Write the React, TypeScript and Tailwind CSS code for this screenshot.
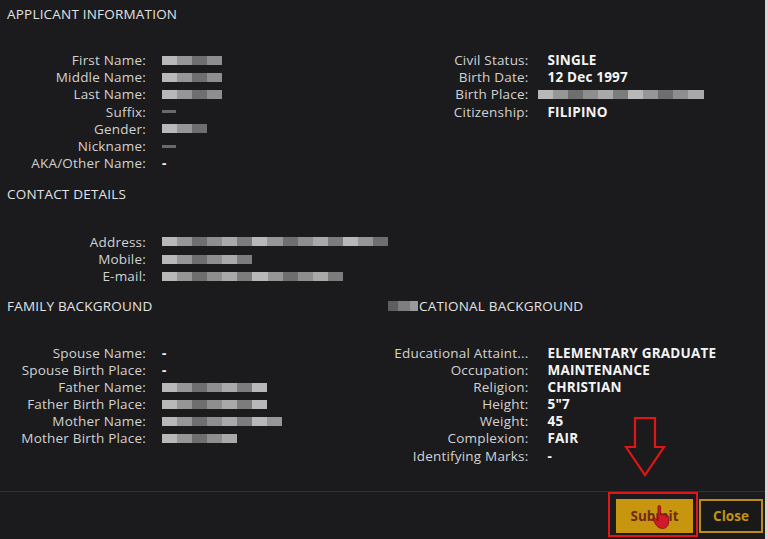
import type { ReactNode } from 'react';

// Pixelated (censored) value: a run of grey cells, widths taken from data.
const SHADES = [
  'bg-[#8e8e8e]',
  'bg-[#a9a9a9]',
  'bg-[#7c7c7c]',
  'bg-[#b8b8b8]',
  'bg-[#969696]',
  'bg-[#6e6e6e]',
];

function Blur({ width, thin = false }: { width: number; thin?: boolean }) {
  if (thin) {
    return <div className="h-[3px] bg-[#6a6a6a]" style={{ width }} />;
  }
  const cells = Math.max(2, Math.round(width / 15));
  return (
    <div className="flex h-[9px] overflow-hidden" style={{ width }}>
      {Array.from({ length: cells }).map((_, i) => (
        <div key={i} className={`h-full flex-1 ${SHADES[(i * 7 + 3) % SHADES.length]}`} />
      ))}
    </div>
  );
}

type Row = { label: string; value?: string; blur?: number; thin?: boolean };

function Field({ label, value, blur, thin, gap }: Row & { gap: string }) {
  return (
    <div className="flex h-[17.2px] items-center">
      <div className="w-[146px] shrink-0 whitespace-nowrap text-right text-[13.5px] tracking-[0.2px] text-[#d2d2d2]">
        {label}
      </div>
      <div className={`flex items-center ${gap}`}>
        {blur ? (
          <Blur width={blur} thin={thin} />
        ) : (
          <span className="whitespace-nowrap text-[13.5px] font-bold tracking-[0.2px] text-[#f4f4f4]">{value}</span>
        )}
      </div>
    </div>
  );
}

function Column({ rows, right = false }: { rows: Row[]; right?: boolean }) {
  return (
    <div className="flex w-[384px] flex-col">
      {rows.map((r) => (
        <Field key={r.label} {...r} gap={right ? 'pl-[19px]' : 'pl-[16px]'} />
      ))}
    </div>
  );
}

function Heading({ children, className = '' }: { children: ReactNode; className?: string }) {
  return (
    <div className={`flex h-[20px] items-center whitespace-nowrap text-[13.5px] tracking-[0.2px] text-[#e2e2e2] ${className}`}>
      {children}
    </div>
  );
}

const applicant: Row[] = [
  { label: 'First Name:', blur: 60 },
  { label: 'Middle Name:', blur: 60 },
  { label: 'Last Name:', blur: 60 },
  { label: 'Suffix:', blur: 14, thin: true },
  { label: 'Gender:', blur: 45 },
  { label: 'Nickname:', blur: 14, thin: true },
  { label: 'AKA/Other Name:', value: '-' },
];

const personal: Row[] = [
  { label: 'Civil Status:', value: 'SINGLE' },
  { label: 'Birth Date:', value: '12 Dec 1997' },
  { label: 'Birth Place:', blur: 166 },
  { label: 'Citizenship:', value: 'FILIPINO' },
];

const contact: Row[] = [
  { label: 'Address:', blur: 226 },
  { label: 'Mobile:', blur: 90 },
  { label: 'E-mail:', blur: 181 },
];

const family: Row[] = [
  { label: 'Spouse Name:', value: '-' },
  { label: 'Spouse Birth Place:', value: '-' },
  { label: 'Father Name:', blur: 105 },
  { label: 'Father Birth Place:', blur: 105 },
  { label: 'Mother Name:', blur: 120 },
  { label: 'Mother Birth Place:', blur: 75 },
];

const education: Row[] = [
  { label: 'Educational Attaint...', value: 'ELEMENTARY GRADUATE' },
  { label: 'Occupation:', value: 'MAINTENANCE' },
  { label: 'Religion:', value: 'CHRISTIAN' },
  { label: 'Height:', value: '5"7' },
  { label: 'Weight:', value: '45' },
  { label: 'Complexion:', value: 'FAIR' },
  { label: 'Identifying Marks:', value: '-' },
];

export default function App() {
  return (
    <div
      className="relative flex h-[539px] w-[768px] flex-col overflow-hidden border-r-[3px] border-[#d6d6d6] bg-[#1b1b1d]"
      style={{ fontFamily: '"Open Sans", "Liberation Sans", sans-serif' }}
    >
      <div className="flex h-[491px] flex-col">
        <Heading className="mt-[4px] pl-[7px]">APPLICANT INFORMATION</Heading>
        <div className="mt-[27.6px] flex">
          <Column rows={applicant} />
          <div className="flex w-[384px] flex-col">
            {personal.map((r) => (
              <div key={r.label} className="flex h-[17.2px] items-center">
                <div className="w-[146px] shrink-0 whitespace-nowrap text-right text-[13.5px] tracking-[0.2px] text-[#d2d2d2]">
                  {r.label}
                </div>
                {r.blur ? (
                  <div className="pl-[9px]">
                    <Blur width={r.blur} />
                  </div>
                ) : (
                  <span className="pl-[19px] text-[13.5px] font-bold tracking-[0.2px] text-[#f4f4f4]">{r.value}</span>
                )}
              </div>
            ))}
          </div>
        </div>

        <Heading className="mt-[12.6px] pl-[7px]">CONTACT DETAILS</Heading>
        <div className="mt-[28.8px]">
          <Column rows={contact} />
        </div>

        <div className="mt-[11.4px] flex">
          <Heading className="w-[388px] pl-[7px]">FAMILY BACKGROUND</Heading>
          <Heading>
            <span className="mr-[1px] flex h-[10px] w-[30px]">
              <span className="h-full w-[10px] bg-[#5e5e5e]" />
              <span className="h-full w-[12px] bg-[#7d7d7d]" />
              <span className="h-full w-[8px] bg-[#9a9a9a]" />
            </span>
            CATIONAL BACKGROUND
          </Heading>
        </div>
        <div className="mt-[27.8px] flex">
          <Column rows={family} />
          <Column rows={education} right />
        </div>
      </div>

      <div className="h-px bg-[#3a3322]" />

      <div className="flex flex-1 items-start justify-end gap-[6px] pr-[2px] pt-[7px]">
        <button className="h-[34px] w-[77px] bg-[#c8960e] text-[13.5px] font-bold text-[#6e2a12]">Submit</button>
        <button className="h-[34px] w-[64px] border-2 border-[#b98d16] bg-[#19191a] text-[13.5px] font-bold text-[#c39414]">
          Close
        </button>
      </div>

      {/* annotation: red arrow and box around Submit */}
      <svg className="absolute left-[624px] top-[416px]" width="44" height="62" viewBox="0 0 44 62">
        <path
          d="M11 2 H31 V31 H40 L21 59 L2 31 H11 Z"
          fill="none"
          stroke="#e21414"
          strokeWidth="2.2"
          strokeLinejoin="miter"
        />
      </svg>
      <div className="absolute left-[608px] top-[492px] h-[45px] w-[90px] border-2 border-[#e3151b]" />
      <svg className="absolute left-[652px] top-[504px]" width="22" height="26" viewBox="0 0 22 26">
        <path
          d="M6 2.5c0-1.2 2.6-1.2 2.6 0V11l1-0.2c0-1 2.4-1 2.4 0l0 0.6c0.2-0.9 2.4-0.9 2.4 0.2v0.8c0.3-0.8 2.3-0.6 2.3 0.5V18c0 3.5-2.4 6.5-6 6.5S5 22.5 3.5 20L1.2 15.5c-0.6-1.2 1-2.2 2-1.2L6 17z"
          fill="#d11a28"
          stroke="#7a0c14"
          strokeWidth="0.8"
        />
      </svg>
    </div>
  );
}
